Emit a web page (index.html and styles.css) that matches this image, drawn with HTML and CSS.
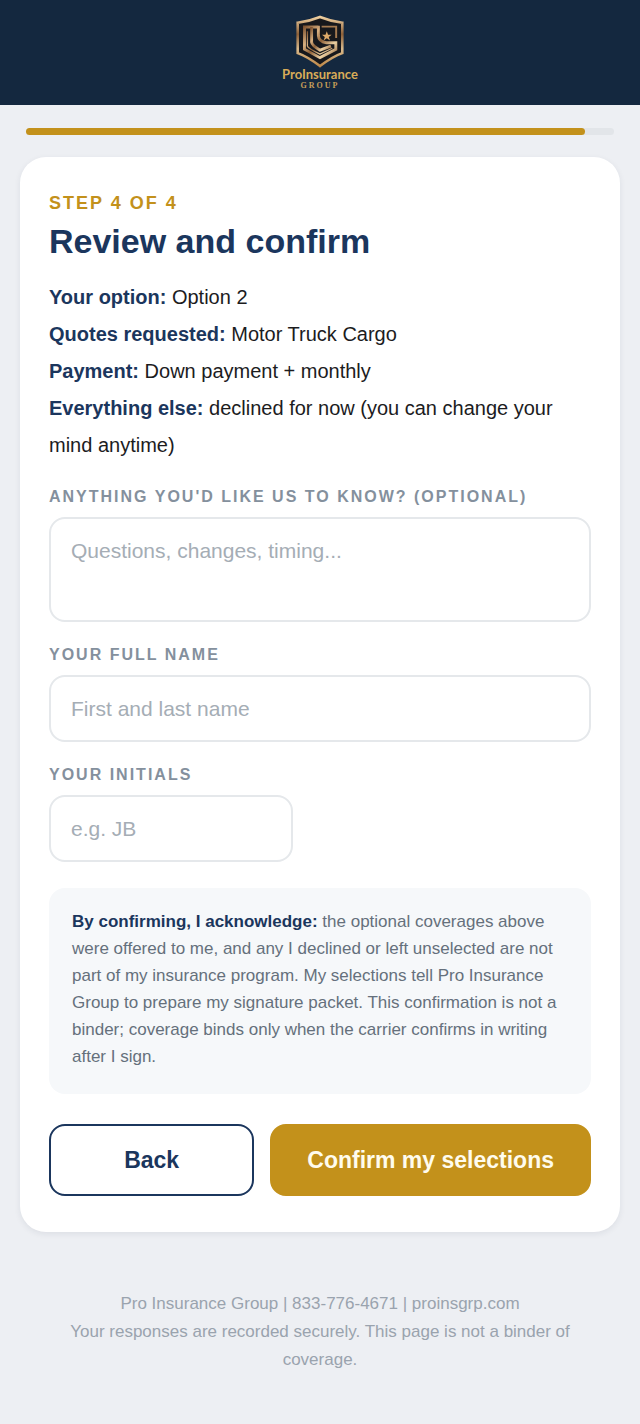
FILE: index.html
```html
<!DOCTYPE html>
<html lang="en">
<head>
    <meta charset="UTF-8">
    <meta name="viewport" content="width=device-width, initial-scale=1.0">
    <title>Pro Insurance Group - Review and confirm</title>
    <link rel="stylesheet" href="styles.css">
</head>
<body>
    <header class="topbar">
        <svg class="logo-mark" viewBox="74 28 152 164" aria-hidden="true">
            <defs>
                <linearGradient id="gold" x1="0" y1="0" x2="1" y2="1">
                    <stop offset="0" stop-color="#7d5230"/>
                    <stop offset="0.3" stop-color="#d9b080"/>
                    <stop offset="0.5" stop-color="#8f6138"/>
                    <stop offset="0.75" stop-color="#ecd0a2"/>
                    <stop offset="1" stop-color="#8f6138"/>
                </linearGradient>
                <linearGradient id="rim" x1="0" y1="0" x2="0" y2="1">
                    <stop offset="0" stop-color="#f0d0a0"/>
                    <stop offset="0.35" stop-color="#8d6038"/>
                    <stop offset="0.65" stop-color="#d8b98c"/>
                    <stop offset="1" stop-color="#c08a4a"/>
                </linearGradient>
            </defs>
            <path d="M150 34 Q185 48 219 52 V146 Q190 156 150 186 Q110 156 81 146 V52 Q115 48 150 34Z" fill="#17181c" stroke="url(#rim)" stroke-width="8"/>
            <g fill="none" stroke="url(#gold)" stroke-width="9">
                <path d="M145 65 H102 V134 L150 160 L199 134 V114 H170 Q146 110 145 92 V61"/>
                <path d="M124 65 V112 Q125 122 150 137 L184 124"/>
                <path d="M111 78 V124 Q112 130 150 149 L188 131" stroke-width="4"/>
            </g>
            <path d="M155 64 H200 V99" fill="none" stroke="#a57a50" stroke-width="6"/>
            <path d="M171 78 L175 89 L186 89 L177 96 L181 107 L171 100 L161 107 L165 96 L156 89 L167 89Z" fill="#dda969"/>
        </svg>
        <div class="logo-name">ProInsurance</div>
        <div class="logo-sub">GROUP</div>
    </header>

    <div class="progress">
        <div class="progress-fill" style="width: 95%"></div>
    </div>

    <main class="card">
        <p class="step">STEP 4 OF 4</p>
        <h1>Review and confirm</h1>

        <div class="summary">
            <p><b>Your option:</b> Option 2</p>
            <p><b>Quotes requested:</b> Motor Truck Cargo</p>
            <p><b>Payment:</b> Down payment + monthly</p>
            <p><b>Everything else:</b> declined for now (you can change your mind anytime)</p>
        </div>

        <form>
            <div class="field">
                <label for="notes">ANYTHING YOU'D LIKE US TO KNOW? (OPTIONAL)</label>
                <textarea id="notes" placeholder="Questions, changes, timing..."></textarea>
            </div>
            <div class="field">
                <label for="fullname">YOUR FULL NAME</label>
                <input type="text" id="fullname" placeholder="First and last name">
            </div>
            <div class="field">
                <label for="initials">YOUR INITIALS</label>
                <input type="text" id="initials" class="short" placeholder="e.g. JB">
            </div>

            <p class="ack"><b>By confirming, I acknowledge:</b> the optional coverages above were offered to me, and any I declined or left unselected are not part of my insurance program. My selections tell Pro Insurance Group to prepare my signature packet. This confirmation is not a binder; coverage binds only when the carrier confirms in writing after I sign.</p>

            <div class="buttons">
                <button type="button" class="btn back">Back</button>
                <button type="submit" class="btn confirm">Confirm my selections</button>
            </div>
        </form>
    </main>

    <footer>
        <p>Pro Insurance Group | 833-776-4671 | proinsgrp.com</p>
        <p>Your responses are recorded securely. This page is not a binder of coverage.</p>
    </footer>
</body>
</html>
```
FILE: styles.css
```css
* {
    box-sizing: border-box;
}
body {
    font-family: "Liberation Sans", Arial, sans-serif;
    background-color: #edeff3;
    color: #1c1c1e;
    margin: 0;
}
p {
    margin: 0;
}
.topbar {
    background-color: #14283f;
    padding: 15px 0 14px;
    display: flex;
    flex-direction: column;
    align-items: center;
}
.logo-mark {
    height: 53px;
    width: 50px;
}
.logo-name {
    font-family: Lato, sans-serif;
    font-size: 13px;
    font-weight: bold;
    line-height: 13px;
    color: #d9ac58;
}
.logo-sub {
    font-family: "Liberation Serif", serif;
    font-size: 8px;
    font-weight: bold;
    line-height: 10px;
    letter-spacing: 2px;
    color: #c79f58;
}
.progress {
    margin: 23px 26px 22px;
    height: 7px;
    border-radius: 4px;
    background-color: #e2e5e9;
}
.progress-fill {
    height: 100%;
    border-radius: 4px;
    background-color: #c3911b;
}
.card {
    margin: 0 20px;
    padding: 36px 29px;
    background-color: #fff;
    border-radius: 26px;
    box-shadow: 0 2px 6px rgba(20, 40, 63, 0.08);
}
.step {
    font-size: 18px;
    line-height: 20px;
    font-weight: bold;
    letter-spacing: 2px;
    color: #c3911b;
}
h1 {
    margin: 6px 0 16px;
    font-size: 34px;
    line-height: 44px;
    color: #1b365d;
}
.summary {
    margin-bottom: 24px;
    font-size: 20px;
    line-height: 37px;
}
.summary b, .ack b {
    color: #1b365d;
}
.field {
    margin-bottom: 24px;
}
label {
    display: block;
    margin-bottom: 11px;
    font-size: 16px;
    line-height: 18px;
    font-weight: bold;
    letter-spacing: 2px;
    color: #84909d;
}
input, textarea {
    display: block;
    width: 100%;
    height: 67px;
    padding: 20px;
    border: 2px solid #e5e8eb;
    border-radius: 16px;
    background-color: #fff;
    font-family: inherit;
    font-size: 21px;
    line-height: 24px;
    color: #1c1c1e;
}
textarea {
    height: 105px;
    resize: none;
}
.short {
    width: 45%;
}
::placeholder {
    color: #a5adb5;
}
.ack {
    margin: 26px 0 30px;
    padding: 20px 23px 24px;
    background-color: #f6f8fa;
    border-radius: 16px;
    font-size: 17px;
    line-height: 27px;
    color: #65707c;
}
.buttons {
    display: flex;
    gap: 16px;
}
.btn {
    height: 72px;
    border: 2px solid #1b365d;
    border-radius: 16px;
    font-family: inherit;
    font-size: 23px;
    font-weight: bold;
    cursor: pointer;
}
.back {
    flex: 1;
    background-color: #fff;
    color: #1b365d;
}
.confirm {
    padding: 0 35px;
    background-color: #c3911b;
    border-color: #c3911b;
    color: #fffcee;
}
footer {
    padding: 58px 40px 50px;
    font-size: 17px;
    line-height: 28px;
    text-align: center;
    color: #9aa3ae;
}
```
